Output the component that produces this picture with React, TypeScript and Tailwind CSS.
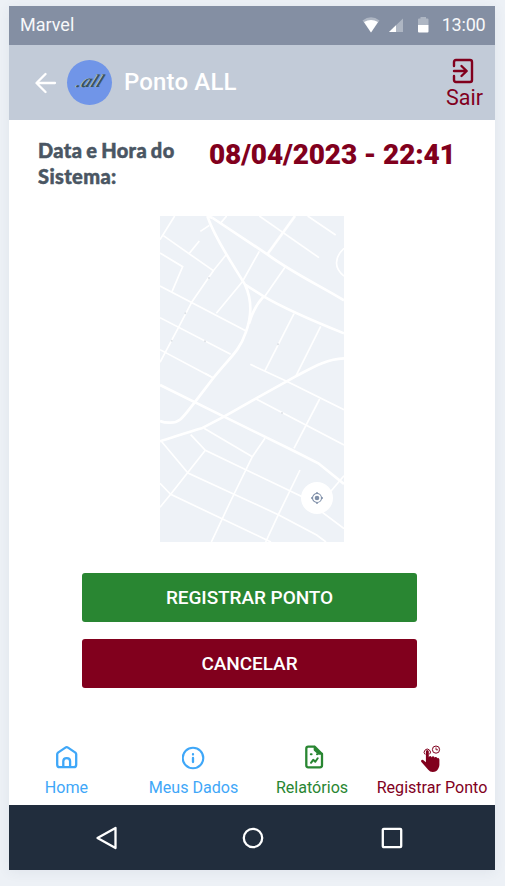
import React from "react";

const fine = [
  "M74 33L30 104", "M40 92L190 197L228 150", "M118 145L148 108", "M30 144L98 185L66 260",
  "M30 243L287 377", "M190 197L126 290L84 370L30 472", "M328 139L277 230L199 325",
  "M405 187L341 279", "M151 79L178 61M211 55L230 33", "M328 33L507 158", "M473 33L557 90",
  "M582 130C552 158 552 190 582 213", "M30 338L242 448", "M30 434L190 519",
  "M432 326L345 497", "M512 364L437 514", "M301 478L410 529L582 614",
  "M317 581L582 720", "M509 582L432 730", "M345 700L307 755L242 888L184 1011",
  "M162 670L307 755", "M34 709L114 804L385 929L500 990L528 1011", "M122 689L166 736L452 873L582 971",
  "M166 736L62 868L30 907", "M30 835L62 868L363 1011", "M450 795L385 929L347 1011",
  "M582 812L540 862", "M165 505L190 519",
];
const major = [
  "M188 39L352 148C430 205 510 242 582 286",
  "M172 33C185 72 218 130 242 169L285 239C303 278 307 330 287 383C268 440 238 458 190 519L134 592C100 635 90 655 58 653Q42 653 30 648",
  "M172 33L188 39", "M435 33L352 148", "M285 239L341 274C410 315 500 352 582 385",
  "M341 274C315 302 304 330 297 356", "M582 460C525 462 480 492 437 514L317 581L222 635L155 670C110 683 75 695 30 709",
  "M30 540L222 635L432 738L505 775L582 837",
];
const dots = [[177,219],[106,325],[65,407],[165,409],[384,418],[396,624]];

function StreetMap() {
  return (
    <div className="relative w-[184px] h-[326px] bg-[#eef2f7]">
      <svg viewBox="30 33 552 978" className="block size-full" fill="none" stroke="#fff">
        {fine.map((d) => <path key={d} d={d} strokeWidth="5" />)}
        {major.map((d) => <path key={d} d={d} strokeWidth="8" />)}
        {dots.map(([x, y]) => <circle key={x} cx={x} cy={y} r="3" fill="#dde1e6" stroke="none" />)}
      </svg>
      <div className="absolute left-[141px] top-[266px] flex size-8 items-center justify-center rounded-full bg-white">
        <svg width="12" height="12" viewBox="0 0 12 12" fill="none" stroke="#7f8fa8">
          <circle cx="6" cy="6" r="4.5" strokeWidth="1.1" />
          <circle cx="6" cy="6" r="2.3" fill="#7f8fa8" stroke="none" />
          <path d="M6 0v1.5M6 10.5V12M0 6h1.5M10.5 6H12" strokeWidth="1.4" />
        </svg>
      </div>
    </div>
  );
}

function HomeIcon() {
  return (
    <svg width="24" height="26" viewBox="0 0 24 26" fill="none" stroke="currentColor" strokeWidth="2.3" strokeLinejoin="round">
      <path d="M2.2 9.3Q2.2 8.3 3 7.6L10.4 2.600Q11.700 1.700 13 2.600L20.400 7.600Q21.200 8.300 21.200 9.300V19.700Q21.200 22.200 18.700 22.200H4.700Q2.200 22.200 2.200 19.700Z" />
      <path d="M8.300 22V16.300Q8.300 13.200 11.700 13.200T15.100 16.300V22" />
    </svg>
  );
}

function InfoIcon() {
  return (
    <svg width="24" height="26" viewBox="0 0 24 26" fill="none" stroke="currentColor" strokeWidth="2.1" strokeLinecap="round">
      <circle cx="11" cy="13" r="10.300" />
      <path d="M11 13v4M11 9.200v.3" strokeWidth="2.300" />
    </svg>
  );
}

function ReportIcon() {
  return (
    <svg width="24" height="26" viewBox="0 0 24 26" fill="none" stroke="currentColor" strokeWidth="2.3" strokeLinecap="round" strokeLinejoin="round" className="relative left-[1.500px]">
      <path d="M12.500 1.700H6.200Q4.300 1.700 4.300 3.700V20.300Q4.300 22.300 6.200 22.300H18Q20 22.300 20 20.300V9L12.800 1.700V4.800L17 8.700H20" />
      <path d="M9 17.800L11.200 14.800L13.300 16.800L15.700 13.300" strokeWidth="2" />
      <path d="M8.800 9.300h.8M15 9.300h.2" strokeWidth="2" />
    </svg>
  );
}

function TapIcon() {
  return (
    <svg width="24" height="28" viewBox="0 0 24 28" fill="none" stroke="currentColor" className="relative -left-[1px]">
      <path fill="currentColor" stroke="none" d="M6.900 6.600Q6.900 5 8.300 5T9.800 6.600V12.500Q9.900 11 11.200 11T12.700 12.500Q12.900 11.200 14.200 11.300T15.500 12.800Q15.800 11.700 17 12T18.200 13.500Q18.500 12.700 19.300 12.900T20.400 14.500V20.100Q20.400 22 19.200 23.700Q17.500 26.900 13.700 26.900Q10.900 26.900 9.200 24.700L2.400 17Q1.600 15.900 2.600 15.100Q3.600 14.400 4.800 15.400L6.900 17.200Z" />
      <path d="M6.200 9.500A3.100 3.100 0 1 1 10.600 9.300" strokeWidth="1" />
      <circle cx="17" cy="4.600" r="3.600" strokeWidth="1" />
      <path d="M17 2.500V4.800H19.100" strokeWidth=".9" />
    </svg>
  );
}

function TabItem({ icon, label, className }: { icon: React.ReactNode; label: string; className: string }) {
  return (
    <div className={"flex flex-col items-center " + className}>
      {icon}
      <span className="whitespace-nowrap leading-5">{label}</span>
    </div>
  );
}

export default function App() {
  return (
    <div className="h-[886px] w-[505px] bg-[#edf1f6] pt-[6px] pl-[9px] font-[Roboto,sans-serif]">
      <div className="flex h-[864px] w-[486px] flex-col bg-white shadow-[0_2px_12px_rgba(50,70,100,0.07)]">
        <div className="flex h-[38.5px] shrink-0 items-center bg-[#848fa3] pl-[11px] pr-[10px] pb-px text-[18px] text-[#f7f8fa]">
          <span className="mr-auto">Marvel</span>
          <svg width="18" height="16" viewBox="0 0 18 16" className="mr-[9px]">
            <path d="M.5 3.500Q9-3 17.500 3.500L9 15.500Z" fill="#aeb6c3" />
            <path d="M2 5Q9 .8 16 5L9 15.500Z" fill="#fff" />
          </svg>
          <svg width="15" height="16" viewBox="0 0 15 16" className="mr-[14px]">
            <path d="M0 15L14 1.500V15Z" fill="#aeb6c3" /><path d="M0 15L7 8.200V15Z" fill="#fff" />
          </svg>
          <svg width="11" height="16" viewBox="0 0 11 16" className="mr-[13px]">
            <path d="M0 2.500Q0 1.500 1 1.500H2.500V0H8V1.500H9.500Q10.500 1.500 10.500 2.500V8H0Z" fill="#aeb6c3" />
            <path d="M0 8H10.500V14.500Q10.500 15.500 9.500 15.500H1Q0 15.500 0 14.500Z" fill="#fff" />
          </svg>
          <span className="-mr-[0.5px] tracking-[-0.2px]">13:00</span>
        </div>

        <header className="flex h-[75.5px] shrink-0 items-center bg-[#c2cbd8] pl-[26px] pr-[12px]">
          <svg width="22" height="22" viewBox="0 0 22 22" fill="none" stroke="#fff" strokeWidth="2.300" strokeLinecap="round" strokeLinejoin="round" className="relative top-px mr-[10px]">
            <path d="M20 11H2M10.500 2L1.500 11L10.500 20" />
          </svg>
          <div className="mr-[12px] flex size-[45px] items-center justify-center rounded-full bg-[#7095e8]">
            <span className="-skew-x-24 pb-[3px] font-['Liberation_Serif',serif] text-[18px] leading-5 font-normal italic tracking-[0.4px] text-[#34505f] [text-shadow:-1px_0_0_#b8c9cc,1px_0_0_#48616b]">.all</span>
          </div>
          <h1 className="mr-auto text-[24px] font-medium tracking-[0.15px] text-white">Ponto ALL</h1>
          <div className="flex flex-col items-center pt-[3px] text-[#81001d]">
            <svg width="22" height="26" viewBox="0 0 22 26" fill="none" stroke="currentColor" strokeWidth="2.400" strokeLinecap="round" strokeLinejoin="round" className="relative -left-[2px]">
              <path d="M2 8V4Q2 2 4 2H18Q20 2 20 4V22Q20 24 18 24H4Q2 24 2 22V18" />
              <path d="M2 13H14M9.500 8L14.700 13L9.500 18" />
            </svg>
            <span className="pt-px text-[21.500px] leading-[25px]">Sair</span>
          </div>
        </header>

        <main className="flex h-[685px] shrink-0 flex-col items-center">
          <div className="flex h-[96px] w-full pl-[29px]">
            <p className="w-[171px] pt-[17px] font-[Lato,sans-serif] text-[20px] leading-[26px] font-black tracking-[0.38px] text-[#4a5663] [-webkit-text-stroke:0.5px_#4a5663] [word-spacing:-1.3px]">Data e Hora do<br />Sistema:</p>
            <p className="pt-[18px] text-[28px] leading-[34px] font-black tracking-[-0.15px] whitespace-nowrap text-[#81001d]">08/04/2023 - 22:41</p>
          </div>
          <StreetMap />
          <button className="mt-[31px] mr-[5px] h-[49px] w-[335px] rounded-[3px] bg-[#298632] pt-[2px] text-[19px] font-medium tracking-[-0.07px] text-white">REGISTRAR PONTO</button>
          <button className="mt-[17px] mr-[5px] h-[49px] w-[335px] rounded-[3px] bg-[#81001d] pt-[2px] text-[19px] font-medium tracking-[-0.07px] text-white">CANCELAR</button>
          <nav className="mt-auto flex h-[60px] w-full pl-[22px] text-[16.1px]">
            <TabItem className="w-[71px] gap-[7px] text-[#3fa7f8]" icon={<HomeIcon />} label="Home" />
            <TabItem className="w-[183px] gap-[7px] text-[#3fa7f8]" icon={<InfoIcon />} label="Meus Dados" />
            <TabItem className="w-[54px] gap-[7px] text-[#298632]" icon={<ReportIcon />} label="Relatórios" />
            <TabItem className="w-[186px] -mr-8 gap-[5px] text-[#81001d]" icon={<TapIcon />} label="Registrar Ponto" />
          </nav>
        </main>

        <div className="flex h-[65px] shrink-0 items-center bg-[#212d3d] pl-[86px]">
          <svg width="24" height="26" viewBox="0 0 24 26" fill="none" stroke="#fff" strokeWidth="2.300" strokeLinejoin="round"><path d="M20.500 3L2.500 13L20.500 23Z" /></svg>
          <svg width="24" height="24" viewBox="0 0 24 24" fill="none" stroke="#fff" strokeWidth="2.300" className="ml-[122px]"><circle cx="12" cy="12" r="9.200" /></svg>
          <svg width="24" height="24" viewBox="0 0 24 24" fill="none" stroke="#fff" strokeWidth="2.300" className="ml-[115px]"><rect x="2.800" y="2.800" width="18.400" height="18.400" rx="1" /></svg>
        </div>
      </div>
    </div>
  );
}
